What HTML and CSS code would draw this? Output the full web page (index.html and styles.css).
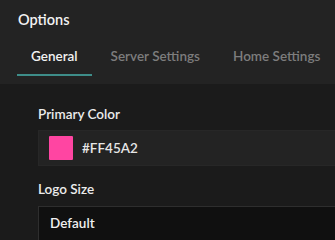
FILE: index.html
```html
<!DOCTYPE html>
<html lang="en">
<head>
    <meta charset="UTF-8">
    <meta name="viewport" content="width=device-width, initial-scale=1.0">
    <title>Options</title>
    <link rel="stylesheet" href="styles.css">
</head>
<body>
    <div class="header">
        <h1>Options</h1>
        <div class="tabs">
            <div class="tab active">General</div>
            <div class="tab">Server Settings</div>
            <div class="tab">Home Settings</div>
        </div>
    </div>
    <div class="content">
        <div class="form-group">
            <label>Primary Color</label>
            <div class="color-input">
                <span class="swatch"></span>
                <span class="color-value">#FF45A2</span>
            </div>
        </div>
        <div class="form-group">
            <label>Logo Size</label>
            <div class="select">Default</div>
        </div>
    </div>
</body>
</html>
```

FILE: styles.css
```css
body {
    margin: 0;
    font-family: Lato, "Open Sans", sans-serif;
    background-color: #1b1b1b;
    color: #e6e6e6;
    overflow: hidden;
}
.header {
    background-color: #232323;
    height: 84px;
    box-sizing: border-box;
    padding: 10px 0 0 18px;
}
h1 {
    margin: 0;
    font-size: 14.5px;
    font-weight: 600;
    line-height: 20px;
    color: #f2f2f2;
}
.tabs {
    display: flex;
    margin-top: 17px;
    white-space: nowrap;
}
.tab {
    flex-shrink: 0;
    font-size: 13.5px;
    font-weight: 600;
    color: #7d7d7d;
    padding: 0 14px 9px;
    margin-right: 5px;
    border-bottom: 2px solid transparent;
    line-height: 18px;
}
.tab:first-child {
    margin-left: -1px;
}
.tab.active {
    color: #f2f2f2;
    border-bottom-color: #3e8d89;
}
.content {
    padding: 21px 0 0 38px;
}
.form-group {
    margin-bottom: 14px;
}
label {
    display: block;
    font-size: 13.5px;
    font-weight: 600;
    line-height: 18px;
    margin-bottom: 7px;
    color: #ececec;
}
.form-group + .form-group label {
    margin-bottom: 8px;
}
.color-input {
    display: flex;
    align-items: center;
    height: 36px;
    box-sizing: border-box;
    background-color: #232323;
    border: 1px solid #272727;
    border-right: none;
    padding-left: 10px;
}
.swatch {
    width: 24px;
    height: 24px;
    background-color: #ff45a2;
    border-radius: 1px;
}
.color-value {
    font-size: 13.5px;
    font-weight: 600;
    line-height: 18px;
    margin-left: 9px;
    color: #e6e6e6;
}
.select {
    height: 40px;
    box-sizing: border-box;
    background-color: #101010;
    border: 1px solid #2e2e2e;
    border-right: none;
    padding: 7px 11px;
    font-size: 13.5px;
    font-weight: 600;
    line-height: 18px;
    color: #f0f0f0;
}
```
